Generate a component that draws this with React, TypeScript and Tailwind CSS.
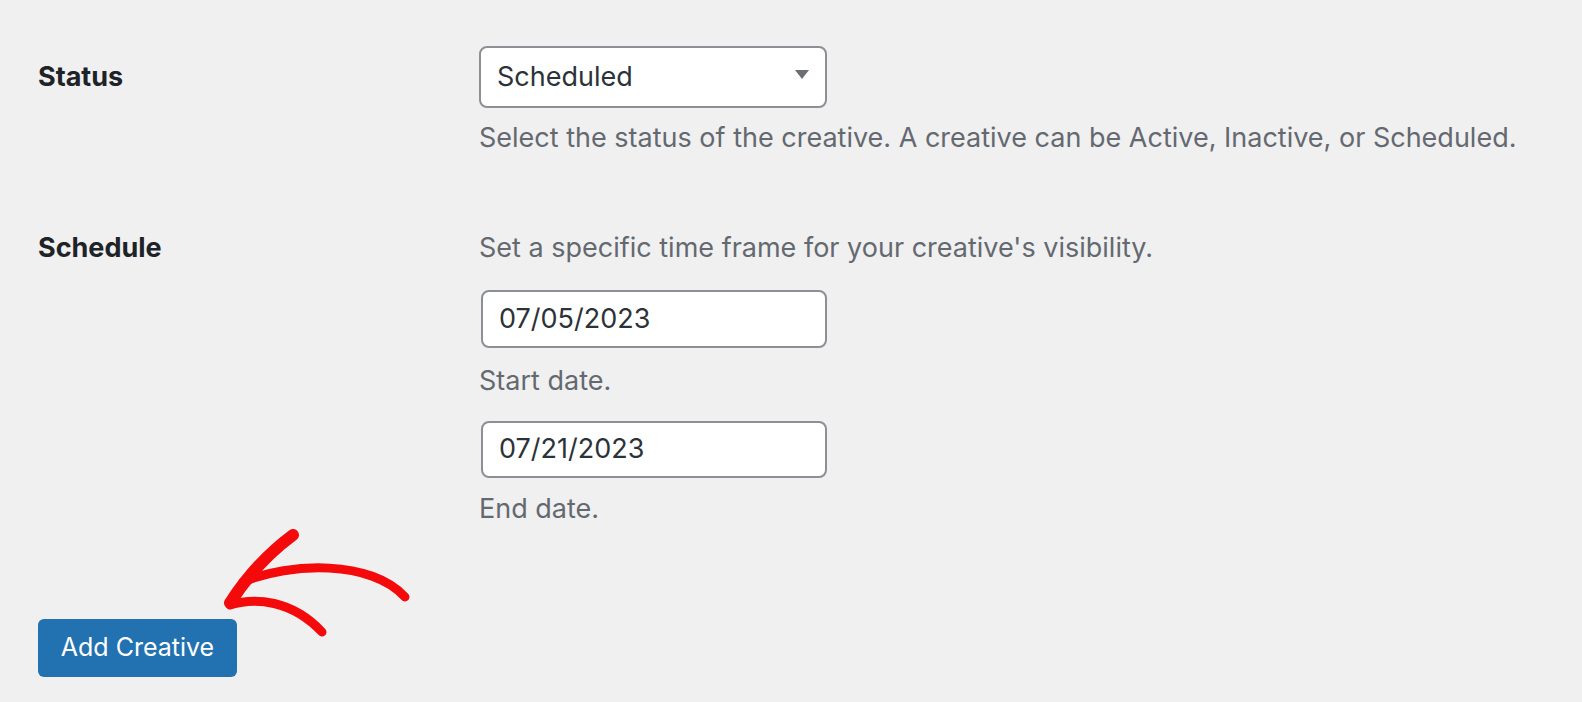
import React from "react";

const font = { fontFamily: "Inter, 'Noto Sans', 'Liberation Sans', sans-serif" };

export default function App() {
  return (
    <div className="relative w-[1582px] h-[702px] overflow-hidden bg-[#f0f0f1]" style={font}>
      <div className="grid grid-cols-[441px_1fr] pl-[38px] pt-[46px]">
        {/* Status row */}
        <div className="h-[62px] flex items-center text-[27px] font-bold text-[#1d2327]">Status</div>
        <div>
          <div className="relative w-[348px] h-[62px] bg-white border-2 border-[#8c8f94] rounded-[8px] flex items-center pl-[16px] text-[27px] text-[#2c3338]">
            Scheduled
            <svg className="absolute right-[16px] top-[22px]" width="14" height="9" viewBox="0 0 14 9">
              <polygon points="0,0 14,0 7,9" fill="#6b6e72" />
            </svg>
          </div>
          <p className="mt-[12px] text-[27px] leading-[36px] text-[#646970]">
            Select the status of the creative. A creative can be Active, Inactive, or Scheduled.
          </p>
        </div>

        {/* Schedule row */}
        <div className="mt-[74px] text-[27px] leading-[36px] font-bold text-[#1d2327]">Schedule</div>
        <div className="mt-[74px] flex flex-col items-start">
          <p className="text-[27px] leading-[36px] text-[#646970]">
            Set a specific time frame for your creative's visibility.
          </p>
          <div className="mt-[24px] ml-[2px] w-[346px] h-[58px] bg-white border-2 border-[#8c8f94] rounded-[8px] flex items-center pl-[16px] text-[27px] text-[#2c3338]">
            07/05/2023
          </div>
          <p className="mt-[15px] text-[27px] leading-[36px] text-[#646970]">Start date.</p>
          <div className="mt-[22px] ml-[2px] w-[346px] h-[57px] bg-white border-2 border-[#8c8f94] rounded-[8px] flex items-center pl-[16px] text-[27px] text-[#2c3338]">
            07/21/2023
          </div>
          <p className="mt-[13px] text-[27px] leading-[36px] text-[#646970]">End date.</p>
        </div>
      </div>

      <div className="pl-[38px] mt-[92px]">
        <button className="w-[199px] h-[58px] bg-[#2271b1] rounded-[6px] text-white text-[25px] flex items-center justify-center">
          Add Creative
        </button>
      </div>

      <svg className="absolute left-0 top-0 pointer-events-none" width="1582" height="702" viewBox="0 0 1582 702">
        <g fill="none" stroke="#f40a0a" strokeLinecap="round" strokeLinejoin="round">
          <path d="M 293 535 C 270 552, 248 575, 230 603" strokeWidth="12" />
          <path d="M 243 582 C 290 562, 372 560, 405 597" strokeWidth="9" />
          <path d="M 230 605 C 255 597, 292 600, 322 632" strokeWidth="9" />
        </g>
      </svg>
    </div>
  );
}
